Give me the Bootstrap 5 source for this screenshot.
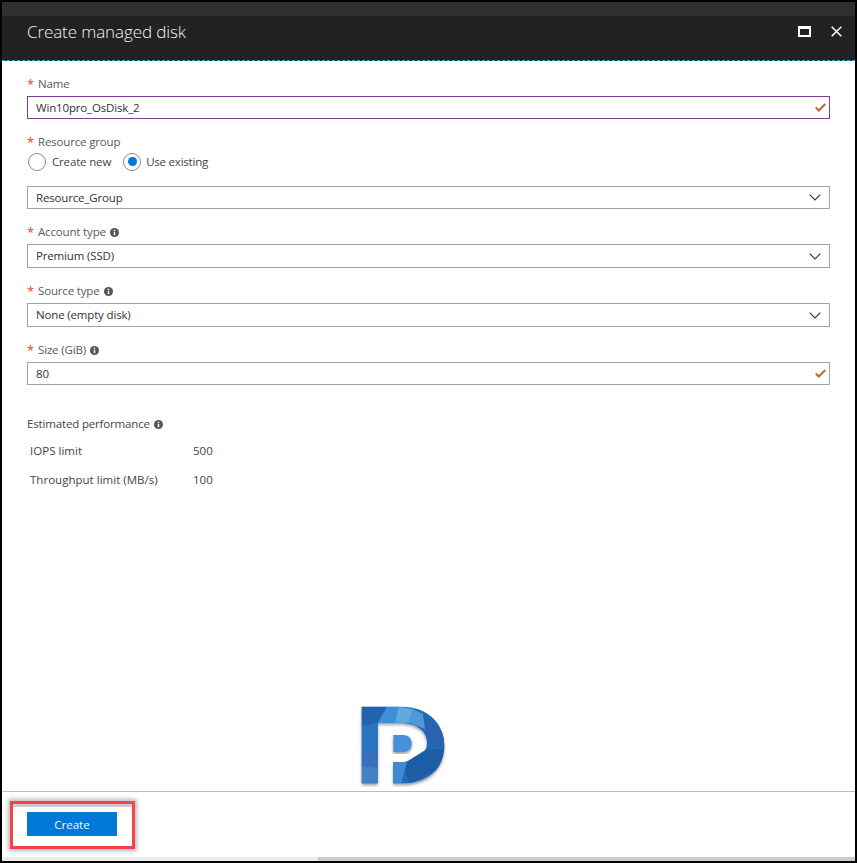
<!DOCTYPE html>
<html lang="en">
<head>
<meta charset="utf-8">
<title>Create managed disk</title>
<link href="https://cdn.jsdelivr.net/npm/bootstrap@5.3.0/dist/css/bootstrap.min.css" rel="stylesheet">
<style>
html,body{height:100%;margin:0}
body{background:#000;padding:2px;font-family:"Open Sans","Noto Sans",sans-serif;font-size:11.5px;letter-spacing:-.16px;color:#333;overflow:hidden}
.blade{position:relative;height:859px;width:853px;background:#fff;overflow:hidden}
.blade-top{height:14px;background:#2f2f2f;flex:none}
.blade-head{height:45px;flex:none;background-color:#222;background-image:radial-gradient(#333 .6px,transparent .7px);background-size:4px 4px;border-bottom:1px dashed #12b5dc;padding:0 13px 13px 25px}
.blade-title{font-size:17px;font-weight:300;color:#f2f2f2;letter-spacing:-.1px}
.blade-main{padding:14px 25px 0;height:730px;flex:none}
.field-label{height:18px;line-height:18px;color:#595959;display:flex;align-items:center}
.req{color:#f33;width:11px;font-size:13px;line-height:18px}
.field-box{height:23px;border:1px solid #a3a3a3;padding:0 8px;color:#333;background:#fff;margin-top:3px}
.field-box.tall{height:24px}
.field-box.valid{border-color:#7d3c98}
.field-gap{margin-bottom:14px}
.info-dot{margin-left:4px;width:9px;height:9px;flex:none}
.radio-dot{width:18px;height:18px;border:1px solid #8a8a8a;border-radius:50%;flex:none;display:flex;align-items:center;justify-content:center;background:#fff}
.radio-dot.on::after{content:"";width:9px;height:9px;border-radius:50%;background:#0078d7}
.radio-row{height:21px;margin-bottom:14px;margin-left:1px;color:#444}
.radio-text{margin-left:6px}
.radio-text-b{margin-left:5px;letter-spacing:-.22px}
.est-head{margin-top:30px;color:#444}
.est-row{color:#444;height:29px;padding-left:3px;letter-spacing:.02px}
.est-first{margin-top:3px}
.est-name{width:163px}
.chk-mark{margin-right:-5px}
.chev-mark{margin-right:0}
.blade-foot{height:70px;flex:none;border-top:1px solid #bdbdbd;padding:20px 25px 0}
.create-btn{width:90px;height:24px;line-height:26px;background:#0078d7;color:#f4f9fd;font-size:11.5px;border:0;border-radius:0;padding:0}
.foot-scroll{height:4px;background:#ececec;margin-top:21px;margin-left:-25px;margin-right:-25px}
.foot-thumb{width:537px;height:4px;background:#ccc}
.red-frame{position:absolute;left:8px;top:799px;width:125px;height:48px;border:3px solid #f5424b;box-shadow:0 0 4px 2px #bbb,inset 0 3px 0 #ccc;pointer-events:none}
.wm-logo{position:absolute;left:357px;top:702px;width:90px;height:88px}
</style>
</head>
<body>
<div class="blade d-flex flex-column">
  <div class="blade-top"></div>
  <header class="blade-head d-flex align-items-center justify-content-between">
    <div class="blade-title">Create managed disk</div>
    <div class="d-flex align-items-center gap-3">
      <svg width="13" height="11" viewBox="0 0 13 11"><path fill="#fff" fill-rule="evenodd" d="M0 0h13v11H0zM2 3v6h9V3z"/></svg>
      <svg width="11" height="11" viewBox="0 0 11 11" class="ms-1"><path stroke="#fff" stroke-width="1.5" d="M.7.7l9.6 9.6M10.3.7L.7 10.3"/></svg>
    </div>
  </header>
  <main class="blade-main">
    <div class="field-gap">
      <div class="field-label"><span class="req">*</span>Name</div>
      <div class="field-box valid d-flex justify-content-between align-items-center"><span>Win10pro_OsDisk_2</span>
        <svg class="chk-mark" width="11" height="9" viewBox="0 0 11 9"><path d="M.8 4.5l3 3L10.3 1" fill="none" stroke="#b0702a" stroke-width="2"/></svg></div>
    </div>
    <div>
      <div class="field-label"><span class="req">*</span>Resource group</div>
      <div class="radio-row d-flex align-items-center">
        <span class="radio-dot"></span><span class="radio-text me-2">Create new</span>
        <span class="radio-dot on ms-1"></span><span class="radio-text-b">Use existing</span>
      </div>
      <div class="field-box d-flex justify-content-between align-items-center field-gap"><span>Resource_Group</span>
        <svg class="chev-mark" width="12" height="7" viewBox="0 0 12 7"><path d="M.7.7L6 6l5.3-5.3" fill="none" stroke="#333" stroke-width="1.1"/></svg></div>
    </div>
    <div class="field-gap">
      <div class="field-label"><span class="req">*</span>Account type<svg class="info-dot" viewBox="0 0 10 10"><circle cx="5" cy="5" r="5" fill="#555"/><path fill="#fff" d="M4.2 2h1.6v1.4H4.2zM4.2 4.2h1.6V8H4.2z"/></svg></div>
      <div class="field-box tall d-flex justify-content-between align-items-center"><span>Premium (SSD)</span>
        <svg class="chev-mark" width="12" height="7" viewBox="0 0 12 7"><path d="M.7.7L6 6l5.3-5.3" fill="none" stroke="#333" stroke-width="1.1"/></svg></div>
    </div>
    <div class="field-gap">
      <div class="field-label"><span class="req">*</span>Source type<svg class="info-dot" viewBox="0 0 10 10"><circle cx="5" cy="5" r="5" fill="#555"/><path fill="#fff" d="M4.2 2h1.6v1.4H4.2zM4.2 4.2h1.6V8H4.2z"/></svg></div>
      <div class="field-box tall d-flex justify-content-between align-items-center"><span>None (empty disk)</span>
        <svg class="chev-mark" width="12" height="7" viewBox="0 0 12 7"><path d="M.7.7L6 6l5.3-5.3" fill="none" stroke="#333" stroke-width="1.1"/></svg></div>
    </div>
    <div>
      <div class="field-label"><span class="req">*</span>Size (GiB)<svg class="info-dot" viewBox="0 0 10 10"><circle cx="5" cy="5" r="5" fill="#555"/><path fill="#fff" d="M4.2 2h1.6v1.4H4.2zM4.2 4.2h1.6V8H4.2z"/></svg></div>
      <div class="field-box d-flex justify-content-between align-items-center"><span>80</span>
        <svg class="chk-mark" width="11" height="9" viewBox="0 0 11 9"><path d="M.8 4.5l3 3L10.3 1" fill="none" stroke="#b0702a" stroke-width="2"/></svg></div>
    </div>
    <div class="field-label est-head">Estimated performance<svg class="info-dot" viewBox="0 0 10 10"><circle cx="5" cy="5" r="5" fill="#555"/><path fill="#fff" d="M4.2 2h1.6v1.4H4.2zM4.2 4.2h1.6V8H4.2z"/></svg></div>
    <div class="est-row est-first d-flex align-items-center"><span class="est-name">IOPS limit</span><span>500</span></div>
    <div class="est-row d-flex align-items-center"><span class="est-name">Throughput limit (MB/s)</span><span>100</span></div>
  </main>
  <footer class="blade-foot">
    <button class="btn create-btn d-block" type="button">Create</button>
    <div class="foot-scroll d-flex justify-content-end"><div class="foot-thumb"></div></div>
  </footer>
  <svg class="wm-logo" viewBox="0 0 90 88" role="img" aria-label="Logo">
    <defs>
      <clipPath id="pouter"><path d="M2.7 2.7H42C70 2.7 85.3 20 85.3 42C85.3 65 68 79.3 44 79.3H2.7Z"/></clipPath>
      <filter id="pshadow" x="-10%" y="-10%" width="120%" height="120%"><feDropShadow dx="0" dy="2" stdDeviation="1.5" flood-color="#555" flood-opacity=".6"/></filter>
    </defs>
    <g filter="url(#pshadow)">
      <path fill="#1f6cba" d="M2.7 2.7H42C70 2.7 85.3 20 85.3 42C85.3 65 68 79.3 44 79.3H34.3V58H40C58 58 68 50 68 39C68 27 58 18.7 40 18.7H18.7V79.3H2.7Z"/>
    </g>
    <g clip-path="url(#pouter)">
      <polygon points="2.7,2.7 28,2.7 18.7,18.7 2.7,22" fill="#2264ac"/>
      <polygon points="28,2.7 42,2.7 36,18.7 18.7,18.7" fill="#3f8fd8"/>
      <polygon points="40,2.7 54,5 50,18.7 36,18.7" fill="#62a9e2"/>
      <polygon points="54,5 64,10 66,25 50,18.7" fill="#4f97d8"/>
      <polygon points="64,10 85.3,30 85.3,45 68,36" fill="#2a62ad"/>
      <polygon points="2.7,22 18.7,18.7 18.7,50 2.7,46" fill="#2a74c4"/>
      <polygon points="2.7,46 18.7,50 18.7,64 2.7,62" fill="#3a6fbc"/>
      <polygon points="2.7,62 18.7,64 18.7,80 2.7,80" fill="#3f82c8"/>
      <polygon points="68,45 85.3,45 80,65 50,80 44,60" fill="#1c5da6"/>
      <polygon points="34.3,58 48,58 42,80 34.3,80" fill="#3d8ad2"/>
    </g>
    <path d="M34.3 31H44C50 31 52.7 35 52.7 39.5C52.7 44 50 48 44 48H34.3Z" fill="#4a90d8" filter="url(#pshadow)"/>
  </svg>
  <div class="red-frame"></div>
</div>
<script src="https://cdn.jsdelivr.net/npm/bootstrap@5.3.0/dist/js/bootstrap.bundle.min.js"></script>
</body>
</html>
